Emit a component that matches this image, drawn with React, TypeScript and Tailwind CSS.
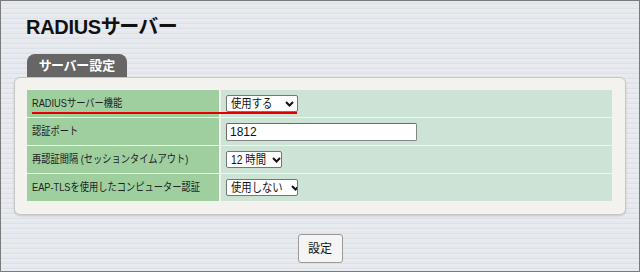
import React from "react";

const jp = "font-['Liberation_Sans','Noto_Sans_CJK_JP',sans-serif]";

function Chevron() {
  return (
    <svg width="9" height="6" viewBox="0 0 9 6" className="shrink-0">
      <path d="M1 1 L4.5 4.5 L8 1" fill="none" stroke="#111" strokeWidth="2" />
    </svg>
  );
}

function Select({ label, width }: { label: string; width: string }) {
  return (
    <div
      className={`${width} h-[17px] bg-white border border-[#767676] rounded-[2px] flex items-center justify-between pl-[4px] pr-[3px] text-[12px] leading-none text-[#111] whitespace-nowrap overflow-hidden`}
    >
      <span className="inline-block origin-left scale-x-[0.86] whitespace-nowrap">{label}</span>
      <Chevron />
    </div>
  );
}

export default function App() {
  const rows: { label: string; value: React.ReactNode }[] = [
    { label: "RADIUSサーバー機能", value: <Select label="使用する" width="w-[72px]" /> },
    {
      label: "認証ポート",
      value: (
        <div className="w-[191px] h-[18px] bg-white border border-[#858585] border-t-[#6b6b6b] border-l-[#6b6b6b] rounded-[2px] flex items-center pl-[3px] text-[12px] leading-none text-[#111]">
          1812
        </div>
      ),
    },
    { label: "再認証間隔 (セッションタイムアウト)", value: <Select label="12 時間" width="w-[56px]" /> },
    { label: "EAP-TLSを使用したコンピューター認証", value: <Select label="使用しない" width="w-[72px]" /> },
  ];

  return (
    <div
      className={`${jp} w-[640px] h-[272px] border border-[#7a7a7a] bg-[repeating-linear-gradient(180deg,#e5e8ed_0px,#e5e8ed_2px,#dde1e7_2px,#dde1e7_3px,#e8ebef_3px,#e8ebef_5px)] pl-[13px] pr-[13px] pt-[14px] flex flex-col overflow-hidden`}
    >
      <h1 className="ml-[12px] h-[24px] leading-[24px] text-[20px] font-bold text-[#111] tracking-[-0.3px] [font-feature-settings:'palt']">
        RADIUSサーバー
      </h1>
      <div className="mt-[15px] ml-[13px] w-[100px] h-[23px] bg-[#666666] rounded-t-[8px] flex items-center justify-center text-white font-bold text-[13px] [font-feature-settings:'palt']">
        サーバー設定
      </div>
      <div className="w-[612px] h-[138px] bg-[#f3f2ee] border border-[#c6c6c6] rounded-[6px] shadow-[0_1px_2px_rgba(0,0,0,0.15)] px-[12px] pt-[12px]">
        <div className="relative flex flex-col gap-[1px] w-[585px]">
          {rows.map((r) => (
            <div key={r.label} className="flex gap-[2px] h-[27px]">
              <div className="w-[192px] bg-[#9fcf9f] flex items-center pl-[5px] text-[11px] text-[#222] whitespace-nowrap overflow-hidden">
                <span className="inline-block origin-left scale-x-[0.84] whitespace-nowrap">{r.label}</span>
              </div>
              <div className="flex-1 bg-[#cce3d6] flex items-center pl-[5px]">{r.value}</div>
            </div>
          ))}
          <div className="absolute left-[5px] top-[22px] w-[265px] h-[2px] bg-[#e50000]" />
        </div>
      </div>
      <div className="flex justify-center mt-[19px]">
        <div className="w-[45px] h-[29px] bg-[#f5f5f5] border border-[#9a9a9a] rounded-[3px] flex items-center justify-center text-[12px] text-[#111]">
          設定
        </div>
      </div>
    </div>
  );
}
